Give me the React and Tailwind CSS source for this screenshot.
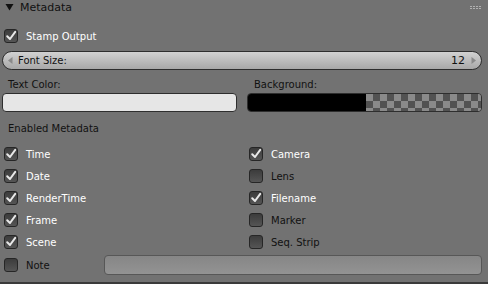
const Check = ({ on }) => (
  <div className="w-[14px] h-[14px] rounded-[3px] border border-[#262626] bg-gradient-to-b from-[#3c3c3c] to-[#555555] flex items-center justify-center shrink-0">
    {on && (
      <svg width="12" height="12" viewBox="0 0 12 12">
        <path d="M2.2 6.2 L5 9 L10.2 1.8" fill="none" stroke="#e8e8e8" strokeWidth="2" strokeLinecap="round" strokeLinejoin="round" />
      </svg>
    )}
  </div>
);

const Item = ({ label, on }) => (
  <div className="flex items-center h-[22px] gap-[8px]">
    <Check on={on} />
    <span className={on ? "text-white" : "text-[#111]"}>{label}</span>
  </div>
);

const left = [
  ["Time", true],
  ["Date", true],
  ["RenderTime", true],
  ["Frame", true],
  ["Scene", true],
];
const right = [
  ["Camera", true],
  ["Lens", false],
  ["Filename", true],
  ["Marker", false],
  ["Seq. Strip", false],
];

export default function App() {
  return (
    <div
      className="w-[488px] h-[284px] bg-[#727272] text-[10px] leading-[13px] text-[#111] overflow-hidden"
      style={{ fontFamily: '"DejaVu Sans", sans-serif' }}
    >
      <div className="h-[282px]">
        {/* header */}
        <div className="h-[14px] flex items-center pl-[5px] pr-[7px]">
          <svg width="9" height="8" viewBox="0 0 9 8" className="mr-[6px]">
            <path d="M0.5 1 L8.5 1 L4.5 7.5 Z" fill="#111" />
          </svg>
          <span className="text-[11px]">Metadata</span>
          <div className="ml-auto grid grid-cols-4 gap-x-[1px] gap-y-[1px] mt-[1px]">
            {Array.from({ length: 8 }).map((_, i) => (
              <div key={i} className="w-[2px] h-[1px] bg-[#b0b0b0]" />
            ))}
          </div>
        </div>

        {/* stamp output */}
        <div className="mt-[15px] h-[14px] pl-[4px] flex items-center gap-[8px]">
          <Check on />
          <span className="text-white">Stamp Output</span>
        </div>

        {/* font size slider */}
        <div className="mt-[8px] ml-[2px] mr-[6px] h-[19px] rounded-full border border-[#2e2e2e] bg-gradient-to-b from-[#d2d2d2] to-[#a8a8a8] flex items-center pl-[5px] pr-[5px]">
          <svg width="5" height="7" viewBox="0 0 5 7" className="mr-[5px]">
            <path d="M4.5 0 L0 3.5 L4.5 7 Z" fill="#8a8a8a" />
          </svg>
          <span>Font Size:</span>
          <span className="ml-auto mr-[6px] text-[11px]">12</span>
          <svg width="5" height="7" viewBox="0 0 5 7">
            <path d="M0.5 0 L5 3.5 L0.5 7 Z" fill="#8a8a8a" />
          </svg>
        </div>

        {/* colors */}
        <div className="mt-[8px] flex pl-[8px] h-[13px]">
          <span className="w-[246px]">Text Color:</span>
          <span>Background:</span>
        </div>
        <div className="mt-[2px] flex gap-[10px] ml-[2px] mr-[6px]">
          <div className="flex-1 h-[19px] rounded-[4px] border border-[#2e2e2e] bg-[#e6e6e6]" />
          <div className="flex-1 h-[19px] rounded-[4px] border border-[#2e2e2e] flex overflow-hidden">
            <div className="w-[118px] bg-black" />
            <div className="flex-1 bg-[repeating-conic-gradient(#525252_0%_25%,#8a8a8a_0%_50%)] bg-[length:14px_14px]" />
          </div>
        </div>

        {/* enabled metadata */}
        <div className="mt-[10px] h-[13px] pl-[8px]">Enabled Metadata</div>

        <div className="mt-[8px] grid grid-cols-[245px_1fr] pl-[4px]">
          <div>
            {left.map(([l, on]) => (
              <Item key={l} label={l} on={on} />
            ))}
          </div>
          <div>
            {right.map(([l, on]) => (
              <Item key={l} label={l} on={on} />
            ))}
          </div>
        </div>

        {/* note */}
        <div className="mt-[2px] flex items-center pl-[4px] pr-[6px] h-[20px]">
          <div className="w-[100px] flex items-center gap-[8px]">
            <Check />
            <span>Note</span>
          </div>
          <div className="flex-1 h-[20px] rounded-[4px] border border-[#575757] bg-gradient-to-b from-[#868686] to-[#939393]" />
        </div>
      </div>
      <div className="h-[2px] bg-[#3a3a3a]" />
    </div>
  );
}
